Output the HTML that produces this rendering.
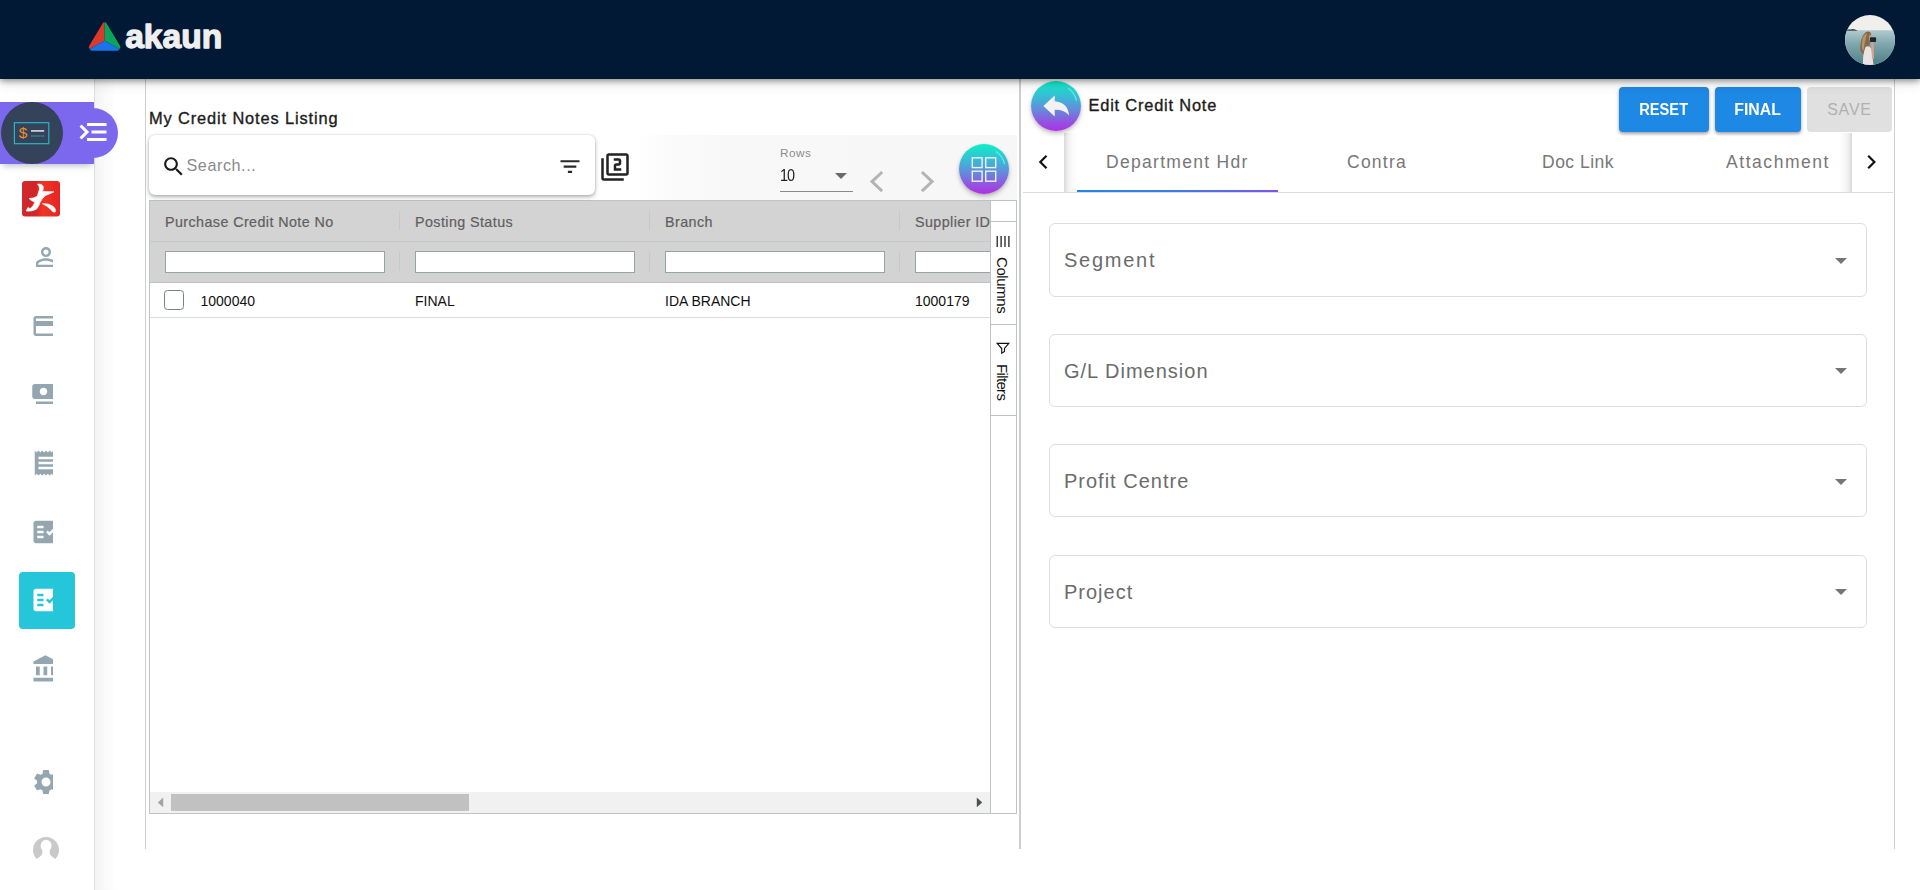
<!DOCTYPE html>
<html lang="en">
<head>
<meta charset="utf-8">
<title>akaun - Credit Notes</title>
<style>
*{box-sizing:border-box;margin:0;padding:0}
html,body{width:1920px;height:890px;overflow:hidden;background:#fff;font-family:"Liberation Sans",sans-serif;color:#222}
.abs{position:absolute}
#app{position:relative;width:1920px;height:890px;overflow:hidden;background:#fff}
/* header */
#hdr{position:absolute;left:0;top:0;width:1920px;height:79px;background:#011935;box-shadow:0 2px 6px rgba(0,0,0,.38),0 4px 12px rgba(0,0,0,.12);z-index:20}
/* sidebar */
#side{position:absolute;left:0;top:79px;width:95px;height:811px;background:#fff;border-right:1px solid #dedede;z-index:5}
#sideshade{position:absolute;left:95px;top:79px;width:22px;height:811px;background:linear-gradient(90deg,rgba(0,0,0,.045),rgba(0,0,0,0));z-index:1}
.sic{position:absolute;left:31px;width:22px;height:30px;overflow:hidden}
.sic svg{position:absolute;left:0;top:0;width:30px;height:30px;fill:#94a7b1}
/* left panel */
#lp{position:absolute;left:145px;top:79px;width:876px;height:770px;border-left:1px solid #cfcfcf;border-right:2px solid #cecece;z-index:2}
#rp{position:absolute;left:1020px;top:79px;width:875px;height:770px;border-right:1px solid #cfcfcf;z-index:2}

.fab{width:50px;height:50px;border-radius:50%;background:linear-gradient(180deg,#0df0c8 0%,#1fdccd 12%,#34c2d3 28%,#4ca6d8 44%,#6a84dc 60%,#8c5ce0 78%,#b02ee4 100%);box-shadow:0 3px 5px rgba(0,0,0,.2),0 1px 3px rgba(0,0,0,.12)}
#grid{position:absolute;left:149px;top:200px;width:842px;height:614px;border:1px solid #bdc3c7;background:#fff;z-index:3;overflow:hidden}
#grid .ghead{position:absolute;left:0;top:0;width:840px;height:81px;background:#d3d3d3}
.sep{position:absolute;width:1px;height:19px;background:#c3c9cc}
.gh{top:13.800px;font-size:14.300px;letter-spacing:.42px;color:#5f5f5f;-webkit-text-stroke:.2px #5f5f5f}
.fin{position:absolute;top:50px;width:220px;height:22px;background:#fff;border:1px solid #95a5a6}
.gc{top:92.500px;font-size:14px;color:#111}
#agside{position:absolute;left:990px;top:200px;width:27px;height:614px;border:1px solid #bdc3c7;background:#fff;z-index:3}
.vt{writing-mode:vertical-lr;left:4px;width:17px;font-size:15px;color:#111;line-height:17px;letter-spacing:-.4px}

.btn{position:absolute;top:87px;height:45px;border-radius:4px;color:#fff;font-weight:700;font-size:16px;line-height:46px;text-align:center;z-index:5;white-space:nowrap}
.tab{top:154.400px;font-size:17.500px;color:#777;z-index:3}
.sel{position:absolute;left:1049px;width:818px;height:73.400px;border:1px solid #dedede;border-radius:6px;background:#fff;z-index:3}
.sel i{position:absolute;left:785px;top:33.500px;width:0;height:0;border-left:6px solid transparent;border-right:6px solid transparent;border-top:6px solid #757575}
.sl{left:14px;top:26px;font-size:20px;color:#6b6b6b;letter-spacing:1px}
.t{position:absolute;white-space:nowrap;line-height:1}
</style>
</head>
<body>
<div id="app">

<!-- HEADER -->
<div id="hdr">
  <svg class="abs" style="left:80px;top:10px" width="160" height="60" viewBox="80 10 160 60">
    <path d="M104.6 22.4 L104.6 40.8 L89.6 49 Q88.2 47.6 89.2 45.8 L102.6 23.4 Q103.6 22.2 104.6 22.4Z" fill="#d93a2b"/>
    <path d="M104.6 22.4 L104.6 40.8 L119.6 49 Q121 47.6 120 45.8 L106.6 23.4 Q105.6 22.2 104.6 22.4Z" fill="#0aa55b"/>
    <path d="M104.6 40.8 L119.6 49 Q119 50.8 117 50.8 L92.2 50.8 Q90.2 50.8 89.6 49Z" fill="#1a73e8"/>
    <text x="125.2" y="48.2" font-family="Liberation Sans, sans-serif" font-weight="700" font-size="34" fill="#efefef" stroke="#efefef" stroke-width="1.3" stroke-linejoin="round" textLength="97" lengthAdjust="spacingAndGlyphs">akaun</text>
  </svg>
  <!-- avatar -->
  <svg class="abs" style="left:1845px;top:15px" width="50" height="50" viewBox="0 0 50 50">
    <defs>
      <clipPath id="avc"><circle cx="25" cy="25" r="25"/></clipPath><filter id="avb" x="-10%" y="-10%" width="120%" height="120%"><feGaussianBlur stdDeviation=".35"/></filter>
      <linearGradient id="sea" x1="0" y1="0" x2="0" y2="1"><stop offset="0" stop-color="#b0cbcf"/><stop offset=".4" stop-color="#7fa6ac"/><stop offset="1" stop-color="#4f7f86"/></linearGradient>
    </defs>
    <g clip-path="url(#avc)">
      <rect width="50" height="50" fill="#f0efeb"/>
      <rect y="15.200" width="50" height="35" fill="url(#sea)"/>
      <g filter="url(#avb)">
      <path d="M1 15.800Q3 13.600 5.500 14.400Q8.500 13 12.800 15.800Z" fill="#30463f"/>
      <path d="M19 19Q22 15.200 25.200 17.200Q27 19.500 25.600 23.500L24.500 30Q22.500 38 19 39.500Q14 38 15.500 30Q16 23 19 19Z" fill="#86694a"/>
      <path d="M17.500 24Q19 19 22 18.500Q19.500 26 18.500 36Q16 34 17.500 24Z" fill="#b59668"/>
      <path d="M24.600 19.500Q26.600 20 26.200 23L25 26L23.800 25Z" fill="#d8a98f"/>
      <path d="M20.500 32Q24 30 26.500 34L28.500 50L18 50Q17.500 40 20.500 32Z" fill="#e8e4e4"/>
      <path d="M26 28L28.600 27.300L29 44L27 44Z" fill="#d6a58c"/>
      <rect x="24.800" y="22.300" width="6.300" height="4.800" rx="1" fill="#23272b"/>
      </g>
    </g>
  </svg>
</div>

<!-- SIDEBAR -->
<div id="sideshade"></div>
<div id="side"></div>

<!-- purple toggle -->
<div class="abs" style="left:0;top:102px;width:94px;height:62px;background:#7c68ee;box-shadow:0 5px 6px -3px rgba(60,60,90,.32);z-index:6"></div>
<div class="abs" style="left:60px;top:108px;width:58px;height:50px;background:#7c68ee;border-radius:0 25px 25px 0;z-index:6"></div>
<div class="abs" style="left:0.5px;top:102px;width:62px;height:62px;border-radius:50%;background:#34425a;z-index:7"></div>
<svg class="abs" style="left:0;top:102px;z-index:8" width="120" height="62" viewBox="0 102 120 62">
  <rect x="14.4" y="122.7" width="34.4" height="21" fill="none" stroke="#2cb5c0" stroke-width="1.2"/>
  <text x="18.700" y="138" font-family="Liberation Sans, sans-serif" font-size="15.500" fill="#e8912d">$</text>
  <rect x="31" y="130" width="13.2" height="1.8" fill="#c9ccd2"/>
  <path d="M31 136h13.2" stroke="#2cb5c0" stroke-width="1.2" stroke-dasharray="1.8 0.6"/>
  <g transform="translate(111,114) scale(-1.5,1.5)" fill="#fff"><path d="M3 18h13v-2H3v2zm0-5h10v-2H3v2zm0-7v2h13V6H3zm18 9.59L17.42 12 21 8.41 19.59 7l-5 5 5 5L21 15.59z"/></g>
</svg>

<!-- red logo -->
<svg class="abs" style="left:22px;top:181px;z-index:6" width="38" height="36" viewBox="0 0 38 36">
  <defs><linearGradient id="rg" x1="0" y1="0" x2="1" y2="0"><stop offset="0" stop-color="#cf2a2f"/><stop offset=".35" stop-color="#d22426"/><stop offset=".55" stop-color="#ee3524"/><stop offset="1" stop-color="#e82323"/></linearGradient></defs>
  <rect x="0" y="0" width="38" height="35.4" rx="3.2" fill="url(#rg)"/>
  <path d="M15.6 3 Q19.5 2.6 21.2 5.2 Q21.6 8.4 20.4 10.4 Q26 10.6 32 10.8 Q27.4 13 23.6 14.4 Q19.8 17.2 18 21.6 Q16.8 26 14.2 28.4 Q9.6 30.6 4.2 30 Q5.2 28 6 26.4 Q7.2 27.8 8.2 27.4 Q11.6 25.6 12.8 21 Q9.4 20 7 17.6 Q12.6 17.4 15.4 15 Q16.4 11.6 17.6 8 Q17.4 4.6 15.6 3Z" fill="#fff" stroke="#fff" stroke-width=".7" stroke-linejoin="round"/>
  <path d="M20.4 22.6 Q26.6 22 31.2 25.2 Q33.8 27.4 33.6 30.8 Q31.8 31.6 30.6 30.6 Q26.2 25.6 20.4 22.6Z" fill="#fff" stroke="#fff" stroke-width=".5" stroke-linejoin="round"/>
</svg>

<!-- sidebar icons -->
<div class="sic" style="top:242px;z-index:6"><svg viewBox="0 0 24 24"><path d="M12 5.9c1.16 0 2.1.94 2.1 2.1s-.94 2.1-2.1 2.1S9.900 9.160 9.900 8s.94-2.100 2.100-2.100m0 9c2.970 0 6.100 1.460 6.100 2.100v1.100H5.900V17c0-.64 3.130-2.100 6.100-2.100M12 4C9.790 4 8 5.790 8 8s1.790 4 4 4 4-1.790 4-4-1.790-4-4-4zm0 9c-2.670 0-8 1.340-8 4v3h16v-3c0-2.660-5.330-4-8-4z"/></svg></div>
<div class="sic" style="top:310.7px;z-index:6"><svg viewBox="0 0 24 24"><path d="M20 4H4c-1.110 0-1.990.89-1.990 2L2 18c0 1.110.89 2 2 2h16c1.110 0 2-.89 2-2V6c0-1.110-.89-2-2-2zm0 14H4v-6h16v6zm0-10H4V6h16v2z"/></svg></div>
<div class="sic" style="top:379.4px;z-index:6"><svg viewBox="0 0 24 24"><path d="M19 14V6c0-1.100-.9-2-2-2H3c-1.100 0-2 .9-2 2v8c0 1.100.9 2 2 2h14c1.100 0 2-.9 2-2zm-9-1c-1.660 0-3-1.340-3-3s1.340-3 3-3 3 1.340 3 3-1.340 3-3 3zm13-6v11c0 1.100-.9 2-2 2H4v-2h17V7h2z"/></svg></div>
<div class="sic" style="top:448.1px;z-index:6"><svg viewBox="0 0 24 24"><path d="M18 17H6v-2h12v2zm0-4H6v-2h12v2zm0-4H6V7h12v2zM3 22l1.500-1.500L6 22l1.500-1.500L9 22l1.500-1.500L12 22l1.500-1.500L15 22l1.500-1.500L18 22l1.500-1.500L21 22V2l-1.500 1.500L18 2l-1.500 1.500L15 2l-1.500 1.500L12 2l-1.500 1.500L9 2 7.500 3.500 6 2 4.500 3.500 3 2v20z"/></svg></div>
<div class="sic" style="top:516.8px;z-index:6"><svg viewBox="0 0 24 24"><path d="M20 3H4c-1.100 0-2 .9-2 2v14c0 1.100.9 2 2 2h16c1.100 0 2-.9 2-2V5c0-1.100-.9-2-2-2zM10 17H5v-2h5v2zm0-4H5v-2h5v2zm0-4H5V7h5v2zm4.820 6L12 12.160l1.410-1.410 1.410 1.420L17.990 9l1.420 1.420L14.820 15z"/></svg></div>
<div class="abs" style="left:19px;top:572px;width:56px;height:57px;border-radius:4px;background:#26c6da;z-index:6"></div>
<div class="sic" style="top:585.2px;z-index:7"><svg viewBox="0 0 24 24" style="fill:#fff"><path d="M20 3H4c-1.100 0-2 .9-2 2v14c0 1.100.9 2 2 2h16c1.100 0 2-.9 2-2V5c0-1.100-.9-2-2-2zM10 17H5v-2h5v2zm0-4H5v-2h5v2zm0-4H5V7h5v2zm4.820 6L12 12.160l1.410-1.410 1.410 1.420L17.990 9l1.420 1.420L14.820 15z"/></svg></div>
<div class="sic" style="top:654px;z-index:6"><svg viewBox="0 0 24 24"><path d="M4 10v7h3v-7H4zm6 0v7h3v-7h-3zM2 22h19v-3H2v3zm14-12v7h3v-7h-3zm-4.500-9L2 6v2h19V6l-9.500-5z"/></svg></div>
<div class="sic" style="top:766.8px;z-index:6"><svg viewBox="0 0 24 24"><path d="M19.140 12.940c.04-.3.06-.61.06-.94 0-.32-.02-.64-.07-.94l2.030-1.580c.18-.14.23-.41.12-.61l-1.920-3.320c-.12-.22-.37-.29-.59-.22l-2.390.96c-.5-.38-1.030-.7-1.620-.94l-.36-2.540c-.04-.24-.24-.41-.48-.41h-3.840c-.24 0-.43.17-.47.41l-.36 2.540c-.59.24-1.130.57-1.620.94l-2.390-.96c-.22-.08-.47 0-.59.22L2.740 8.870c-.12.21-.08.47.12.61l2.030 1.580c-.05.3-.09.63-.09.94s.02.64.07.94l-2.030 1.580c-.18.14-.23.41-.12.61l1.920 3.320c.12.22.37.29.59.22l2.390-.96c.5.38 1.030.7 1.620.94l.36 2.540c.05.24.24.41.48.41h3.840c.24 0 .44-.17.47-.41l.36-2.540c.59-.24 1.130-.56 1.620-.94l2.390.96c.22.08.47 0 .59-.22l1.920-3.320c.12-.22.07-.47-.12-.61l-2.010-1.580zM12 15.600c-1.980 0-3.600-1.620-3.600-3.600s1.620-3.600 3.600-3.600 3.600 1.620 3.600 3.600-1.620 3.600-3.600 3.600z"/></svg></div>
<svg class="abs" style="left:32px;top:836px;z-index:6" width="28" height="28" viewBox="0 0 28 28">
  <defs><clipPath id="pc"><circle cx="14" cy="14" r="13"/></clipPath></defs>
  <circle cx="14" cy="14" r="13" fill="#c9c9c9"/>
  <g fill="#fff"><ellipse cx="14.100" cy="9.800" rx="5.500" ry="6.100"/><path d="M10.300 12V16.500Q10.600 18.200 9.200 19.500Q7 21.600 3.600 23.400L2 28H26L24.400 23.400Q21 21.600 18.800 19.500Q17.400 18.200 17.700 16.500V12Z"/></g>
</svg>

<!-- LEFT PANEL -->
<div id="lp"></div>
<div class="t" id="ttl" style="left:149px;top:110px;font-size:16.400px;font-weight:400;color:#1c1c1c;letter-spacing:.87px;-webkit-text-stroke:.35px #1c1c1c;z-index:3">My Credit Notes Listing</div>

<!-- paginator background -->
<div class="abs" style="left:596px;top:135px;width:421px;height:65px;background:linear-gradient(90deg,#fff 0,#fff 8%,#fafafa 20%,#f8f8f8 32%,#f7f7f7 100%);z-index:2"></div>

<!-- search box -->
<div class="abs" style="left:149px;top:134.500px;width:446px;height:60.500px;background:#fff;border-radius:6px;box-shadow:0 2px 4px rgba(0,0,0,.30),0 0 2px rgba(0,0,0,.18);z-index:4"></div>
<svg class="abs" style="left:160.600px;top:153.700px;z-index:5" width="25.300" height="25.300" viewBox="0 0 24 24"><path fill="#1a1a1a" d="M15.500 14h-.79l-.28-.27C15.410 12.590 16 11.110 16 9.500 16 5.910 13.090 3 9.500 3S3 5.910 3 9.500 5.910 16 9.500 16c1.610 0 3.090-.59 4.230-1.570l.27.28v.79l5 4.990L20.490 19l-4.990-5zm-6 0C7.010 14 5 11.990 5 9.500S7.010 5 9.500 5 14 7.010 14 9.500 11.990 14 9.500 14z"/></svg>
<div class="t" id="srch" style="left:186.500px;top:156.600px;font-size:16.200px;color:#8a8a8a;letter-spacing:.55px;z-index:5">Search...</div>
<svg class="abs" style="left:556px;top:155px;z-index:5" width="28" height="24" viewBox="556 155 28 24"><path d="M560.500 161.200h19M563.700 166.600h12.600M567.900 171.900h4.200" stroke="#2a2a2a" stroke-width="2.100" fill="none"/></svg>
<svg class="abs" style="left:600px;top:152px;z-index:5" width="30" height="30" viewBox="0 0 24 24"><path fill="#222" d="M3 5H1v16c0 1.100.9 2 2 2h16v-2H3V5zm18-4H7c-1.100 0-2 .9-2 2v14c0 1.100.9 2 2 2h14c1.100 0 2-.9 2-2V3c0-1.100-.9-2-2-2zm0 16H7V3h14v14zm-4-4h-4v-2h2c1.100 0 2-.89 2-2V7c0-1.110-.9-2-2-2h-4v2h4v2h-2c-1.100 0-2 .89-2 2v4h6v-2z"/></svg>

<!-- paginator -->
<div class="t" id="rows" style="left:780px;top:147.500px;font-size:11.800px;color:#8c8c8c;letter-spacing:.45px;z-index:5">Rows</div>
<div class="t" id="ten" style="left:779.500px;top:168px;font-size:16px;color:#222;letter-spacing:-1px;transform:scaleX(.9);transform-origin:0 50%;z-index:5">10</div>
<svg class="abs" style="left:835px;top:173px;z-index:5" width="12" height="6" viewBox="0 0 12 6"><path d="M0 0h12L6 6z" fill="#6a6a6a"/></svg>
<div class="abs" style="left:780px;top:191px;width:73px;height:1px;background:#8a8a8a;z-index:5"></div>
<svg class="abs" style="left:866px;top:167px;z-index:5" width="24" height="30" viewBox="866 167 24 30"><path d="M882.200 172l-10.200 9.600 10.200 9.600" stroke="#b4b4b4" stroke-width="3" fill="none"/></svg>
<svg class="abs" style="left:916px;top:167px;z-index:5" width="24" height="30" viewBox="916 167 24 30"><path d="M921.900 172l10.200 9.600-10.200 9.600" stroke="#b4b4b4" stroke-width="3" fill="none"/></svg>

<!-- grid toggle FAB -->
<div class="abs fab" style="left:959px;top:143.500px;z-index:6"></div>
<svg class="abs" style="left:959px;top:143.500px;z-index:7" width="50" height="50" viewBox="0 0 50 50">
  <path d="M37 7.600Q43.600 12 45.600 20" stroke="#62f4f4" stroke-width="1.200" fill="none" opacity=".9"/>
  <g fill="none" stroke="#f0f1fb" stroke-width="1.400"><rect x="13.300" y="13.800" width="9.800" height="9.800"/><rect x="26.700" y="13.800" width="10" height="9.800"/><rect x="13.300" y="27.200" width="9.800" height="10"/><rect x="26.700" y="27.200" width="10" height="10"/></g>
</svg>

<!-- GRID -->
<div id="grid">
  <div class="ghead"></div>
  <div class="abs" style="left:0;top:40px;width:840px;height:1px;background:#c3c9cc"></div>
  <div class="abs" style="left:0;top:81px;width:840px;height:1px;background:#bdc3c7"></div>
  <div class="abs" style="left:0;top:116px;width:840px;height:1px;background:#d9dcde"></div>
  <div class="sep" style="left:249px;top:10px"></div><div class="sep" style="left:499px;top:10px"></div><div class="sep" style="left:749px;top:10px"></div>
  <div class="sep" style="left:249px;top:51px"></div><div class="sep" style="left:499px;top:51px"></div><div class="sep" style="left:749px;top:51px"></div>
  <div class="t gh" id="gh1" style="left:15px">Purchase Credit Note No</div>
  <div class="t gh" id="gh2" style="left:265px">Posting Status</div>
  <div class="t gh" id="gh3" style="left:515px">Branch</div>
  <div class="t gh" id="gh4" style="left:765px">Supplier ID</div>
  <div class="fin" style="left:15px"></div><div class="fin" style="left:265px"></div><div class="fin" style="left:515px"></div><div class="fin" style="left:765px;width:90px"></div>
  <div class="abs" style="left:14px;top:89px;width:20px;height:20px;border:1.500px solid #78838c;border-radius:3.500px;background:#fff"></div>
  <div class="t gc" id="gc1" style="left:50.500px">1000040</div>
  <div class="t gc" id="gc2" style="left:265px">FINAL</div>
  <div class="t gc" id="gc3" style="left:515px">IDA BRANCH</div>
  <div class="t gc" id="gc4" style="left:765px">1000179</div>
  <!-- scrollbar -->
  <div class="abs" style="left:0;top:591px;width:840px;height:22px;background:#f1f1f1"></div>
  <div class="abs" style="left:21px;top:593px;width:298px;height:17px;background:#c1c1c1"></div>
  <svg class="abs" style="left:6px;top:595px" width="10" height="12" viewBox="0 0 10 12"><path d="M7.200 1.600v9.600L1.800 6.400z" fill="#a3a3a3"/></svg>
  <svg class="abs" style="left:824px;top:595px" width="10" height="12" viewBox="0 0 10 12"><path d="M2.800 1.600v9.600L8.200 6.400z" fill="#505050"/></svg>
</div>
<!-- ag side bar -->
<div id="agside">
  <div class="abs" style="left:0;top:20px;width:25px;height:1px;background:#bdc3c7"></div>
  <div class="abs" style="left:0;top:123px;width:25px;height:1px;background:#bdc3c7"></div>
  <div class="abs" style="left:0;top:214px;width:25px;height:1px;background:#bdc3c7"></div>
  <svg class="abs" style="left:5px;top:34.300px" width="15" height="13" viewBox="0 0 15 13"><path d="M1.200 1v11M5.100 1v11M9 1v11M12.900 1v11" stroke="#222" stroke-width="1.300"/></svg>
  <div class="t vt" id="vcol" style="top:56px">Columns</div>
  <svg class="abs" style="left:0;top:136px" width="25" height="24" viewBox="991 337 25 24"><path d="M997.200 343.400H1008.800L1004.500 348.500V351.500L1001.700 353.300V348.500Z" fill="none" stroke="#111" stroke-width="1.150" stroke-linejoin="miter"/></svg>
  <div class="t vt" id="vfil" style="top:163px;letter-spacing:-.65px">Filters</div>
</div>
<!-- RIGHT PANEL -->
<div id="rp"></div>
<!-- back FAB -->
<div class="abs fab" style="left:1031px;top:81px;z-index:8"></div>
<svg class="abs" style="left:1031px;top:81px;z-index:9" width="50" height="50" viewBox="0 0 50 50">
  <path d="M37 7Q43.500 11.500 45.500 19.800" stroke="#62f4f4" stroke-width="1.200" fill="none" opacity=".9"/>
  <path fill="#f2f2f2" d="M12.400 24.900L23.700 14.600V20.200Q33 21 36.200 27.500Q37.700 30.600 38.100 34.400Q33.500 28.500 23.700 28.800V35.500Z"/>
</svg>
<div class="t" id="ect" style="left:1088.500px;top:97px;font-size:16.400px;color:#1c1c1c;letter-spacing:.81px;-webkit-text-stroke:.35px #1c1c1c;z-index:5">Edit Credit Note</div>

<!-- buttons -->
<div class="btn" style="left:1619px;width:90px;background:#1e88e5;box-shadow:0 2px 3px rgba(0,0,0,.28),0 1px 5px rgba(0,0,0,.12)"><span id="b1" style="display:inline-block;transform:scaleX(.915)">RESET</span></div>
<div class="btn" style="left:1715px;width:86px;background:#1e88e5;box-shadow:0 2px 3px rgba(0,0,0,.28),0 1px 5px rgba(0,0,0,.12)"><span id="b2" style="display:inline-block;transform:scaleX(.99)">FINAL</span></div>
<div class="btn" style="left:1807px;width:85px;background:#e0e0e0;color:#b0b0b0;font-weight:400"><span id="b3" style="letter-spacing:.8px">SAVE</span></div>

<!-- tabs -->
<div class="abs" style="left:1023px;top:192px;width:870px;height:1px;background:#dcdcdc;z-index:3"></div>
<div class="abs" style="left:1024px;top:132px;width:40px;height:60px;background:#fff;z-index:4"></div><div class="abs" style="left:1064px;top:133px;width:13px;height:59px;background:linear-gradient(90deg,rgba(0,0,0,.15),rgba(0,0,0,.06) 30%,rgba(0,0,0,.02) 65%,rgba(0,0,0,0));z-index:4"></div>
<div class="abs" style="left:1852px;top:132px;width:41px;height:60px;background:#fff;z-index:4"></div><div class="abs" style="left:1839px;top:133px;width:13px;height:59px;background:linear-gradient(270deg,rgba(0,0,0,.15),rgba(0,0,0,.06) 30%,rgba(0,0,0,.02) 65%,rgba(0,0,0,0));z-index:4"></div>
<svg class="abs" style="left:1036px;top:152px;z-index:5" width="16" height="20" viewBox="1036 152 16 20"><path d="M1046.500 155.800l-6.200 6.200 6.200 6.200" stroke="#111" stroke-width="2.200" fill="none"/></svg>
<svg class="abs" style="left:1864px;top:152px;z-index:5" width="16" height="20" viewBox="1864 152 16 20"><path d="M1868.200 155.800l6.200 6.200-6.200 6.200" stroke="#111" stroke-width="2.200" fill="none"/></svg>
<div class="t tab" id="t1" style="left:1106px;letter-spacing:1.300px">Department Hdr</div>
<div class="t tab" id="t2" style="left:1347px;letter-spacing:1.250px">Contra</div>
<div class="t tab" id="t3" style="left:1542px;letter-spacing:.5px">Doc Link</div>
<div class="t tab" id="t4" style="left:1726px;letter-spacing:1.550px">Attachment</div>
<div class="abs" style="left:1077px;top:190px;width:201px;height:2px;background:linear-gradient(90deg,#1e88e5,#3f7be8 50%,#7a55f0);z-index:3"></div>

<!-- selects -->
<div class="sel" style="top:223.200px"><span class="t sl" id="s1" style="letter-spacing:1.750px">Segment</span><i></i></div>
<div class="sel" style="top:333.700px"><span class="t sl" id="s2">G/L Dimension</span><i></i></div>
<div class="sel" style="top:444.100px"><span class="t sl" id="s3">Profit Centre</span><i></i></div>
<div class="sel" style="top:554.500px"><span class="t sl" id="s4">Project</span><i></i></div>

</div>
</body>
</html>
